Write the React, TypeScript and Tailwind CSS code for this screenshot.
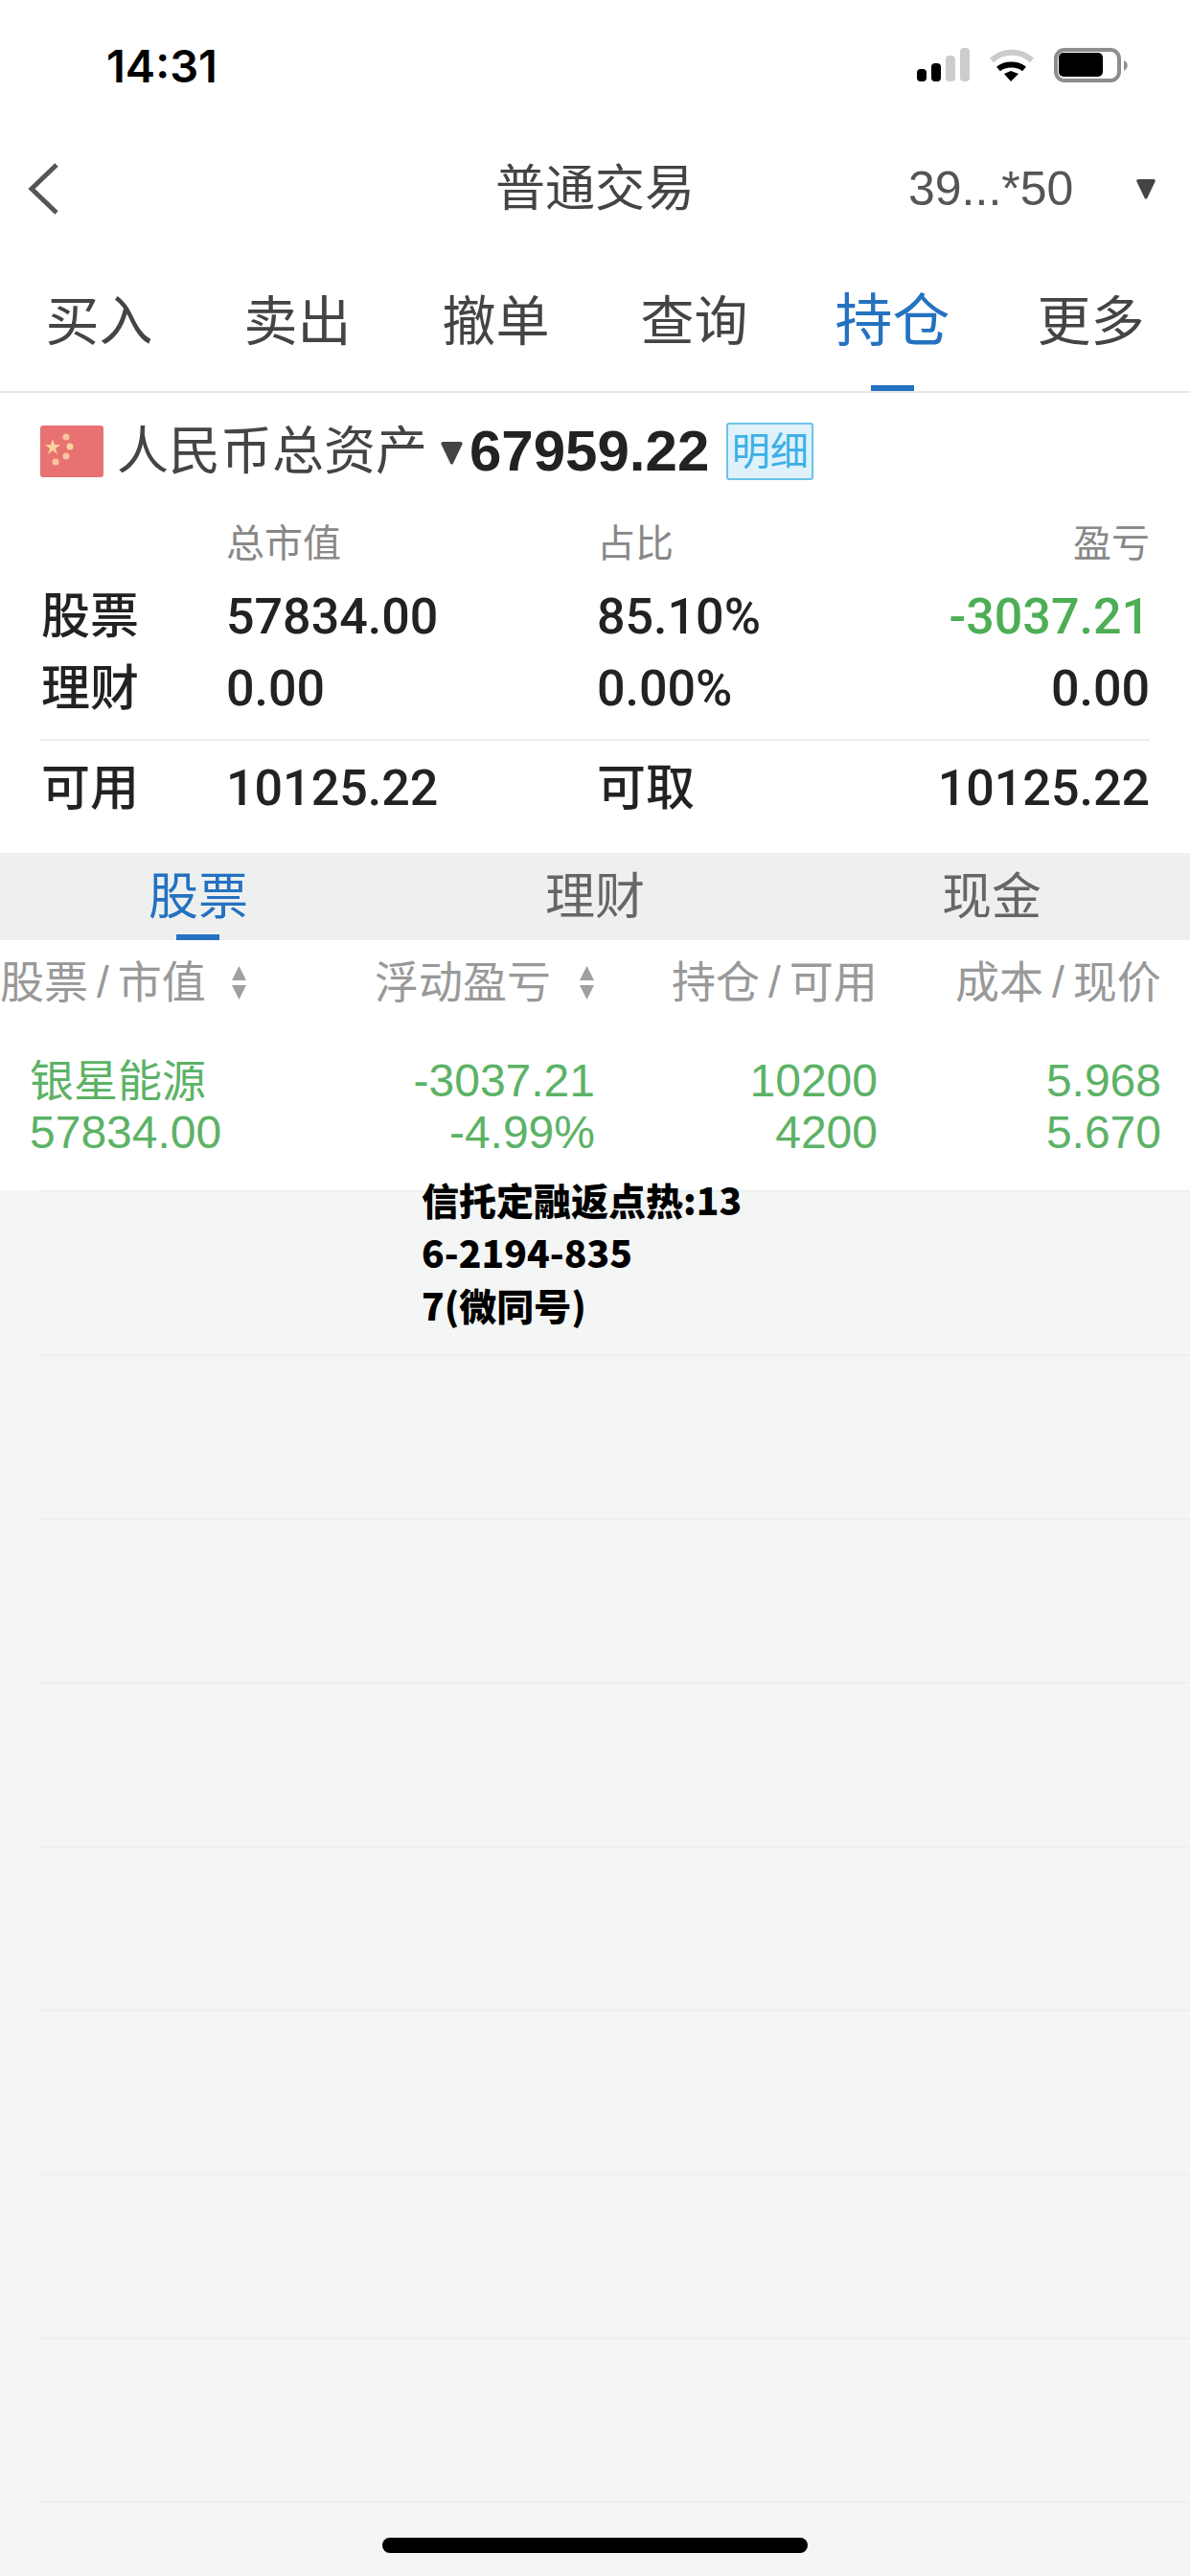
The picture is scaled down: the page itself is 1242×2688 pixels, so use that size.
import React from 'react';

const sans = "font-['Liberation_Sans','Noto_Sans_CJK_SC',sans-serif]";
const num = "font-['Roboto','Noto_Sans_CJK_SC',sans-serif]";

const ChinaFlag = () => (
  <svg width="66" height="54" viewBox="0 0 66 54" className="shrink-0">
    <rect width="66" height="54" rx="3" fill="#e87272" />
    <polygon points="13,14 15,20 21,20 16,24 18,30 13,26 8,30 10,24 5,20 11,20" fill="#f9d49a" />
    <circle cx="27" cy="12" r="3.5" fill="#f7c5a0" />
    <circle cx="31" cy="22" r="3.5" fill="#f9d49a" />
    <circle cx="27" cy="32" r="3.5" fill="#f7c5a0" />
    <circle cx="16" cy="38" r="3.5" fill="#f7c5a0" />
  </svg>
);

const StatusIcons = () => (
  <svg width="223" height="36" viewBox="0 0 223 36" className="shrink-0">
    <rect x="0" y="22" width="10" height="13" rx="4" fill="#000" />
    <rect x="15" y="16" width="10" height="19" rx="4" fill="#000" />
    <rect x="30" y="8" width="10" height="27" rx="4" fill="#ccc" />
    <rect x="45" y="0" width="10" height="35" rx="4" fill="#ccc" />
    <path d="M78 13 C90 2 108 2 120 13" fill="none" stroke="#ccc" strokeWidth="6" />
    <path d="M85 22 C92 16 105 16 112 22" fill="none" stroke="#000" strokeWidth="6" />
    <polygon points="91,27 98,24 106,27 98,35" fill="#000" />
    <rect x="145" y="2" width="66" height="32" rx="9" fill="#fff" stroke="#8e8e8e" strokeWidth="4" />
    <rect x="148" y="5" width="46" height="25" rx="5" fill="#000" />
    <path d="M216 13 C221 15 221 21 216 24 Z" fill="#8e8e8e" />
  </svg>
);

const Triangle = ({ className }: { className: string }) => (
  <svg viewBox="0 0 20 24" preserveAspectRatio="none" className={className} fill="currentColor">
    <path d="M1 2 Q1 0 3 0 H17 Q19 0 19 2 L11 23 Q10 24 9 23 Z" />
  </svg>
);

const SortArrows = () => (
  <svg width="15" height="35" viewBox="0 0 15 35" className="shrink-0">
    <polygon points="7.5,0 15,15 0,15" fill="#a0a0a0" />
    <polygon points="7.5,35 15,20 0,20" fill="#a0a0a0" />
  </svg>
);

const Split = ({ a, b }: { a: string; b: string }) => (
  <span>
    {a}
    <span className="px-[9px] font-light">/</span>
    {b}
  </span>
);

const tabs = ['买入', '卖出', '撤单', '查询', '持仓', '更多'];

export default function App() {
  return (
    <div className={`relative flex h-[2688px] w-[1242px] flex-col overflow-hidden bg-[#f4f6f5] ${sans}`}>
      {/* status bar */}
      <div className="flex h-[136px] shrink-0 items-center justify-between bg-white pl-[111px] pr-[62px]">
        <span className="font-['Inter',sans-serif] text-[47px] font-semibold leading-none text-black">14:31</span>
        <StatusIcons />
      </div>

      {/* nav */}
      <div className="grid h-[122px] shrink-0 grid-cols-[1fr_auto_1fr] items-center bg-white">
        <div className="pl-[27px]">
          <svg width="36" height="56" viewBox="0 0 36 56">
            <path d="M32 3 L6 28 L32 53" fill="none" stroke="#555" strokeWidth="5" />
          </svg>
        </div>
        <span className="text-[52px] leading-none text-[#444]">普通交易</span>
        <div className="flex items-center pl-[223px]">
          <span className="text-[50px] leading-none text-[#555]">39...*50</span>
          <Triangle className="ml-[65px] h-[21px] w-[22px] shrink-0 text-[#444]" />
        </div>
      </div>

      {/* main tabs */}
      <div className="grid h-[152px] shrink-0 grid-cols-6 border-b-2 border-[#e8e8e8] bg-white">
        {tabs.map((t) => (
          <div key={t} className="relative flex items-center justify-center pt-[5px]">
            <span className={`leading-none ${t === '持仓' ? 'text-[60px] text-[#2472c0]' : 'text-[56px] text-[#444]'}`}>{t}</span>
            {t === '持仓' && <div className="absolute bottom-0 left-[81px] h-[6px] w-[45px] bg-[#2472c0]" />}
          </div>
        ))}
      </div>

      {/* assets summary */}
      <div className="flex h-[480px] shrink-0 flex-col bg-white px-[42px]">
        <div className="mt-[31px] flex h-[60px] items-center">
          <ChinaFlag />
          <span className="ml-[14px] text-[54px] leading-none text-[#444]">人民币总资产</span>
          <Triangle className="ml-[13px] mt-[4px] h-[24px] w-[25px] shrink-0 text-[#444]" />
          <span className="ml-[6px] text-[60px] font-bold leading-none text-[#222]">67959.22</span>
          <span className="ml-[18px] flex h-[60px] w-[91px] items-center justify-center rounded-[3px] border-2 border-[#6cc2e8] bg-[#dff2fb] text-[40px] leading-none text-[#3cb0e6]">
            明细
          </span>
        </div>

        <div className="mt-[41px] grid grid-cols-[194px_387px_1fr] items-center text-[40px] leading-[50px] text-[#888]">
          <span />
          <span>总市值</span>
          <span className="flex justify-between">
            <span>占比</span>
            <span>盈亏</span>
          </span>
        </div>

        <div className={`mt-[14px] grid grid-cols-[194px_387px_1fr] items-center text-[52px] font-medium leading-[75px] text-[#222] ${num}`}>
          <span className="pl-[1px] text-[51px]">股票</span>
          <span>57834.00</span>
          <span className="flex justify-between">
            <span>85.10%</span>
            <span className="text-[#4cae55]">-3037.21</span>
          </span>
          <span className="pl-[1px] text-[51px]">理财</span>
          <span>0.00</span>
          <span className="flex justify-between">
            <span>0.00%</span>
            <span>0.00</span>
          </span>
        </div>

        <div className="mt-[15px] border-t-2 border-[#ececec] pt-[19px]">
          <div className={`grid grid-cols-[194px_387px_1fr] items-center text-[52px] font-medium leading-[62px] text-[#222] ${num}`}>
            <span className="pl-[1px] text-[51px]">可用</span>
            <span>10125.22</span>
            <span className="flex justify-between">
              <span className="text-[51px]">可取</span>
              <span>10125.22</span>
            </span>
          </div>
        </div>
      </div>

      {/* sub tabs */}
      <div className="grid h-[91px] shrink-0 grid-cols-3 bg-[#eef0f0]">
        {['股票', '理财', '现金'].map((t, i) => (
          <div key={t} className="relative flex items-center justify-center">
            <span className={`text-[52px] leading-none ${i === 0 ? 'text-[#2472c0]' : 'text-[#666]'}`}>{t}</span>
            {i === 0 && <div className="absolute bottom-0 left-[184px] h-[6px] w-[45px] bg-[#2472c0]" />}
          </div>
        ))}
      </div>

      {/* table */}
      <div className="h-[261px] shrink-0 bg-white">
        <div className="grid h-[88px] grid-cols-[391px_310px_296px_1fr] items-center text-[46px] leading-none text-[#999]">
          <div className="flex items-center">
            <Split a="股票" b="市值" />
            <span className="ml-[27px]"><SortArrows /></span>
          </div>
          <div className="flex items-center">
            <span>浮动盈亏</span>
            <span className="ml-[30px]"><SortArrows /></span>
          </div>
          <Split a="持仓" b="可用" />
          <Split a="成本" b="现价" />
        </div>
        <div className="mt-[32px] grid grid-cols-[358px_232px_295px_296px] pl-[31px] text-[48px] leading-[54px] text-[#5cb266]">
          <span className="text-[46px]">银星能源</span>
          <span className="text-right">-3037.21</span>
          <span className="text-right">10200</span>
          <span className="text-right">5.968</span>
          <span>57834.00</span>
          <span className="text-right">-4.99%</span>
          <span className="text-right">4200</span>
          <span className="text-right">5.670</span>
        </div>
      </div>

      {/* empty rows */}
      <div className="flex min-h-0 flex-1 flex-col overflow-hidden pl-[42px]">
        {Array.from({ length: 9 }).map((_, i) => (
          <div key={i} className="h-[171px] shrink-0 border-t-2 border-[#eeefef]" />
        ))}
      </div>

      {/* watermark over the list */}
      <div className="absolute left-[440px] top-[1224px] font-['Noto_Sans_CJK_SC',sans-serif] text-[39px] font-black leading-[55px] text-black">
        信托定融返点热:13
        <br />
        6-2194-835
        <br />
        7(微同号)
      </div>

      <div className="absolute bottom-[24px] left-[399px] h-[16px] w-[444px] rounded-[8px] bg-black" />
    </div>
  );
}
